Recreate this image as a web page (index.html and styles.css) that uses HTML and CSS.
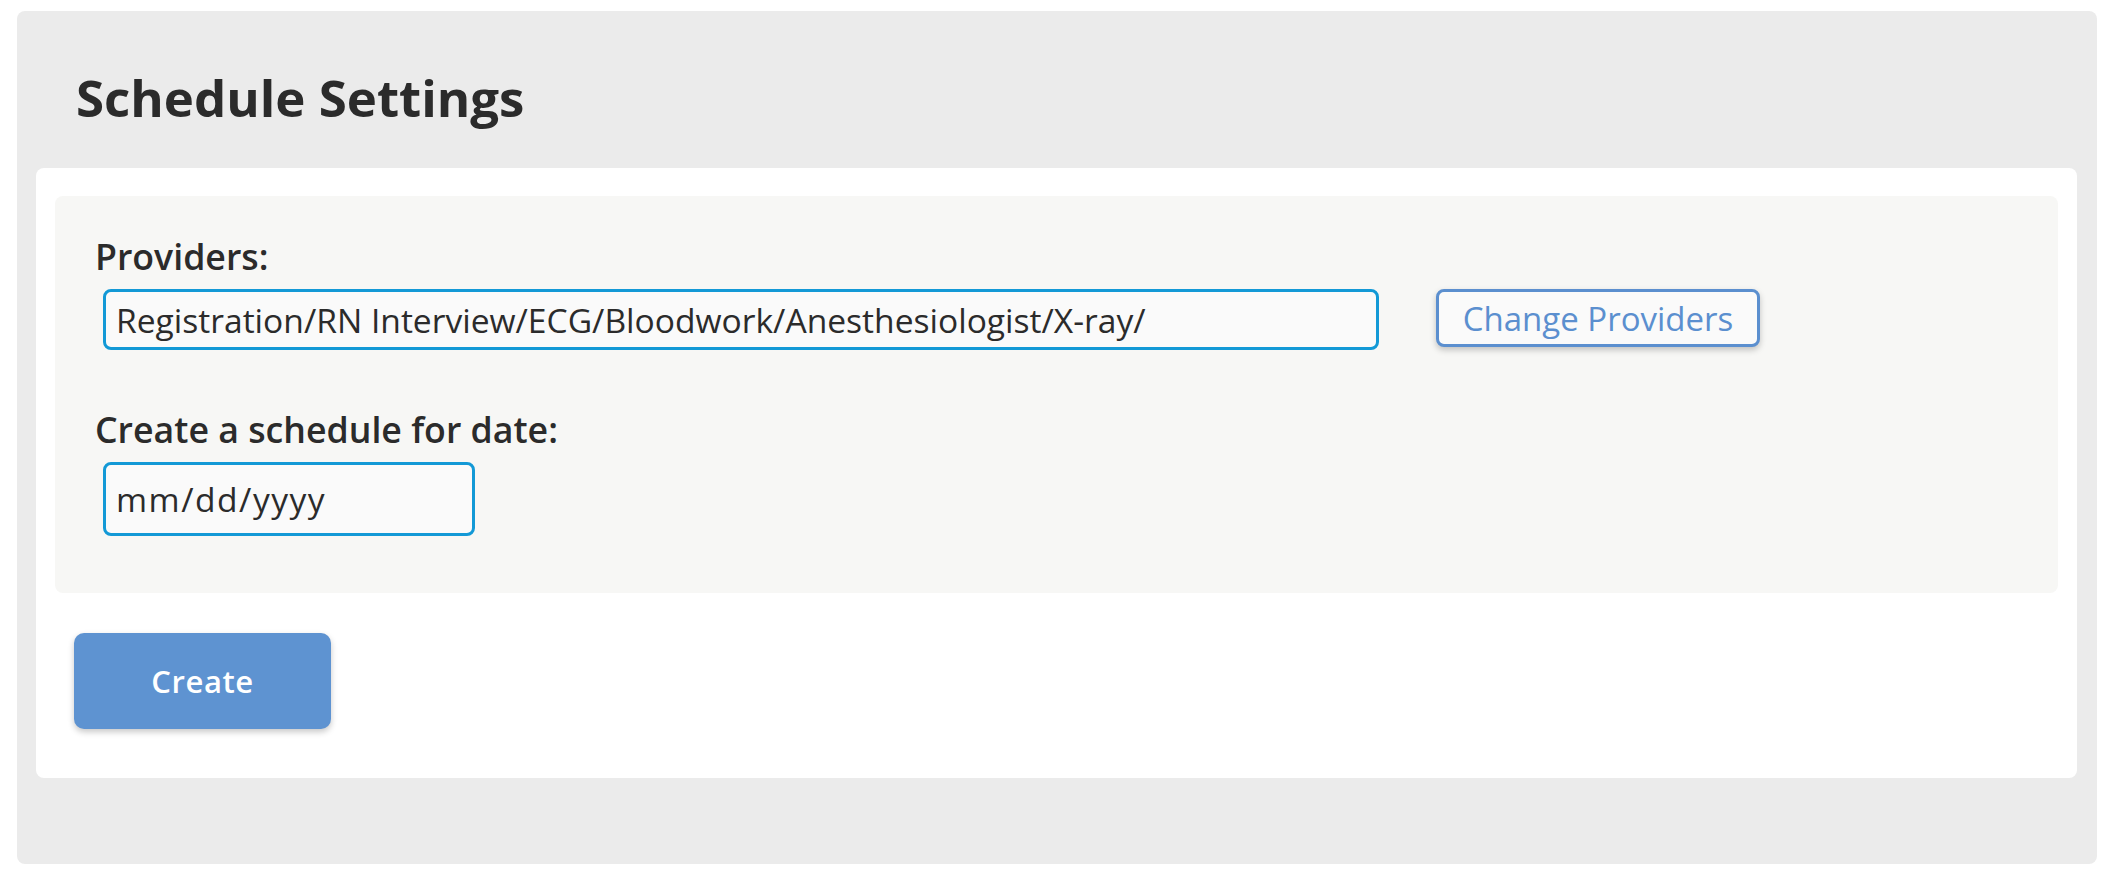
FILE: index.html
```html
<!DOCTYPE html>
<html lang="en">
<head>
<meta charset="utf-8">
<title>Schedule Settings</title>
<link rel="stylesheet" href="styles.css">
</head>
<body>
  <section class="panel">
    <header class="panel-header">
      <h1 class="title">Schedule Settings</h1>
    </header>
    <div class="card">
      <div class="fields">
        <label class="field-label" for="providers">Providers:</label>
        <div class="provider-row">
          <input id="providers" class="text-input providers-input" type="text" value="Registration/RN Interview/ECG/Bloodwork/Anesthesiologist/X-ray/" readonly>
          <button class="outline-btn" type="button">Change Providers</button>
        </div>
        <label class="field-label second" for="date">Create a schedule for date:</label>
        <div class="date-row">
          <input id="date" class="text-input date-input" type="text" value="mm/dd/yyyy">
        </div>
      </div>
      <button class="primary-btn" type="button">Create</button>
    </div>
  </section>
</body>
</html>
```
FILE: styles.css
```css
html, body {
  height: 100%;
}
body {
  margin: 0;
  box-sizing: border-box;
  padding: 11px 13px 13px 17px;
  font-family: "Open Sans", "Liberation Sans", sans-serif;
  color: #2b2b2b;
  background: #ffffff;
  overflow: hidden;
}

.panel {
  background: #ebebeb;
  border-radius: 8px;
  padding: 0 20px 86px 19px;
}

.panel-header {
  height: 157px;
  box-sizing: border-box;
  padding: 16px 0 0 40px;
  display: flex;
  align-items: center;
}

.title {
  margin: 0;
  font-size: 51px;
  line-height: 1;
  font-weight: 700;
  color: #2b2b2b;
}

.card {
  background: #ffffff;
  border-radius: 8px;
  padding: 28px 19px 49px 19px;
}

.fields {
  background: #f7f7f5;
  border-radius: 8px;
  padding: 43px 40px 57px 40px;
}

.field-label {
  display: block;
  font-size: 35.7px;
  line-height: 35px;
  font-weight: 600;
  color: #2b2b2b;
}

.field-label.second {
  margin-top: 62px;
}

.provider-row {
  display: flex;
  align-items: flex-start;
  margin-top: 15px;
  padding-left: 8px;
}

.date-row {
  margin-top: 15px;
  padding-left: 8px;
}

.text-input {
  box-sizing: border-box;
  border: 3px solid #1399d6;
  border-radius: 8px;
  background: #fafafa;
  font-family: "Open Sans", "Liberation Sans", sans-serif;
  font-size: 33.6px;
  color: #2b2b2b;
  padding: 0 10px;
  outline: none;
  margin: 0;
}

.providers-input {
  width: 1276px;
  height: 61px;
}

.date-input {
  width: 372px;
  height: 74px;
  letter-spacing: 1.5px;
}

.outline-btn {
  margin-left: 57px;
  width: 324px;
  height: 58px;
  box-sizing: border-box;
  border: 3px solid #5b8fcf;
  border-radius: 8px;
  background: #fafafa;
  color: #5b8fcf;
  font-family: "Open Sans", "Liberation Sans", sans-serif;
  font-size: 33px;
  padding: 0;
  box-shadow: 0 3px 6px rgba(0, 0, 0, 0.22);
  cursor: pointer;
}

.primary-btn {
  display: block;
  margin: 40px 0 0 19px;
  width: 257px;
  height: 96px;
  border: none;
  border-radius: 10px;
  background: #5e93d1;
  color: #ffffff;
  font-family: "Open Sans", "Liberation Sans", sans-serif;
  font-size: 31px;
  font-weight: 600;
  letter-spacing: 0.6px;
  box-shadow: 0 3px 6px rgba(0, 0, 0, 0.22);
  cursor: pointer;
}
```
